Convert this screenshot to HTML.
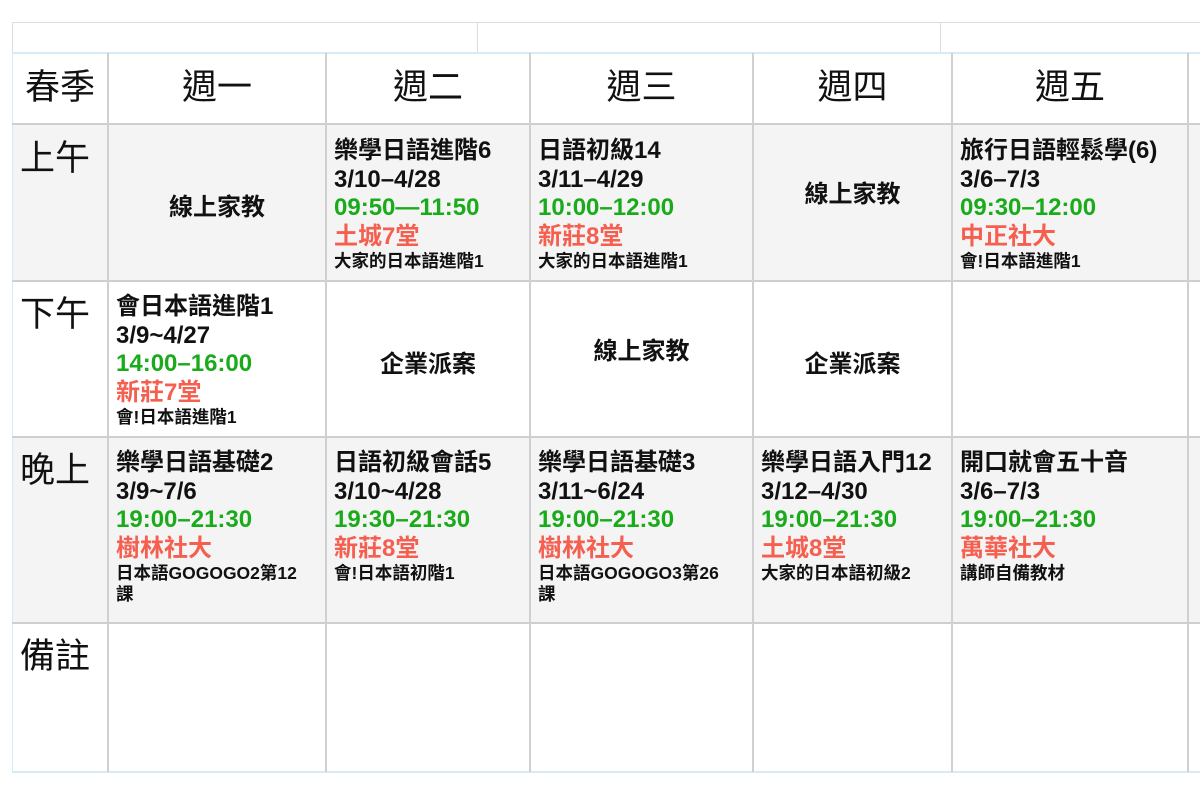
<!DOCTYPE html>
<html><head><meta charset="utf-8"><style>
*{margin:0;padding:0;box-sizing:border-box}
body{width:1200px;height:800px;background:#fff;position:relative;overflow:hidden;font-family:"Liberation Sans","Noto Sans CJK TC",sans-serif;color:#111}
.a{position:absolute}
.bg{position:absolute;background:#f4f4f4}
.v{position:absolute;width:2px;background:#d0d0d0}
.h{position:absolute;height:2px;background:#cfcfcf}
.hd{position:absolute;top:49px;height:71px;font-size:35px;display:flex;align-items:center;justify-content:center}
.lb{position:absolute;left:20px;font-size:35px;line-height:40px}
.c{position:absolute;font-size:24px;line-height:28.5px;font-weight:bold}
.g{color:#1aab1a}.r{color:#f55f4f}
.s{font-size:17.5px;line-height:21px;font-weight:bold;display:block}
.ctr{position:absolute;font-size:24px;font-weight:bold;text-align:center}
</style></head><body>
<div class="a" style="left:12px;top:22px;width:1200px;height:31px;border:1px solid #ddd;border-bottom:none"></div>
<div class="a" style="left:477px;top:22px;width:1px;height:31px;background:#ddd"></div>
<div class="a" style="left:940px;top:22px;width:1px;height:31px;background:#ddd"></div>
<div class="bg" style="left:12px;top:124px;width:1188px;height:157px"></div>
<div class="bg" style="left:12px;top:437px;width:1188px;height:186px"></div>
<div class="a" style="left:12px;top:52px;width:1188px;height:2px;background:#d5ebf7"></div>
<div class="a" style="left:12px;top:771px;width:1188px;height:2px;background:#d5ebf7"></div>
<div class="a" style="left:12px;top:53px;width:1px;height:719px;background:#d5ebf7"></div>
<div class="h" style="left:12px;top:123px;width:1188px"></div>
<div class="h" style="left:12px;top:280px;width:1188px"></div>
<div class="h" style="left:12px;top:436px;width:1188px"></div>
<div class="h" style="left:12px;top:622px;width:1188px"></div>
<div class="v" style="left:107px;top:53px;height:719px"></div>
<div class="v" style="left:325px;top:53px;height:719px"></div>
<div class="v" style="left:529px;top:53px;height:719px"></div>
<div class="v" style="left:752px;top:53px;height:719px"></div>
<div class="v" style="left:951px;top:53px;height:719px"></div>
<div class="v" style="left:1187px;top:53px;height:719px"></div>

<div class="hd" style="left:12px;width:96px">春季</div>
<div class="hd" style="left:108px;width:218px">週一</div>
<div class="hd" style="left:326px;width:204px">週二</div>
<div class="hd" style="left:530px;width:223px">週三</div>
<div class="hd" style="left:753px;width:199px">週四</div>
<div class="hd" style="left:952px;width:236px">週五</div>

<div class="lb" style="top:139px">上午</div>
<div class="lb" style="top:295px">下午</div>
<div class="lb" style="top:451px">晚上</div>
<div class="lb" style="top:637px">備註</div>

<div class="ctr" style="left:108px;width:218px;top:187px">線上家教</div>
<div class="c" style="left:334px;top:137px">樂學日語進階6<br>3/10–4/28<br><span class="g">09:50—11:50</span><br><span class="r">土城7堂</span><span class="s">大家的日本語進階1</span></div>
<div class="c" style="left:538px;top:137px">日語初級14<br>3/11–4/29<br><span class="g">10:00–12:00</span><br><span class="r">新莊8堂</span><span class="s">大家的日本語進階1</span></div>
<div class="ctr" style="left:753px;width:199px;top:174px">線上家教</div>
<div class="c" style="left:960px;top:137px">旅行日語輕鬆學(6)<br>3/6–7/3<br><span class="g">09:30–12:00</span><br><span class="r">中正社大</span><span class="s">會!日本語進階1</span></div>

<div class="c" style="left:116px;top:293px">會日本語進階1<br>3/9~4/27<br><span class="g">14:00–16:00</span><br><span class="r">新莊7堂</span><span class="s">會!日本語進階1</span></div>
<div class="ctr" style="left:326px;width:204px;top:344px">企業派案</div>
<div class="ctr" style="left:530px;width:223px;top:331px">線上家教</div>
<div class="ctr" style="left:753px;width:199px;top:344px">企業派案</div>

<div class="c" style="left:116px;top:449px">樂學日語基礎2<br>3/9~7/6<br><span class="g">19:00–21:30</span><br><span class="r">樹林社大</span><span class="s">日本語GOGOGO2第12<br>課</span></div>
<div class="c" style="left:334px;top:449px">日語初級會話5<br>3/10~4/28<br><span class="g">19:30–21:30</span><br><span class="r">新莊8堂</span><span class="s">會!日本語初階1</span></div>
<div class="c" style="left:538px;top:449px">樂學日語基礎3<br>3/11~6/24<br><span class="g">19:00–21:30</span><br><span class="r">樹林社大</span><span class="s">日本語GOGOGO3第26<br>課</span></div>
<div class="c" style="left:761px;top:449px">樂學日語入門12<br>3/12–4/30<br><span class="g">19:00–21:30</span><br><span class="r">土城8堂</span><span class="s">大家的日本語初級2</span></div>
<div class="c" style="left:960px;top:449px">開口就會五十音<br>3/6–7/3<br><span class="g">19:00–21:30</span><br><span class="r">萬華社大</span><span class="s">講師自備教材</span></div>
</body></html>
